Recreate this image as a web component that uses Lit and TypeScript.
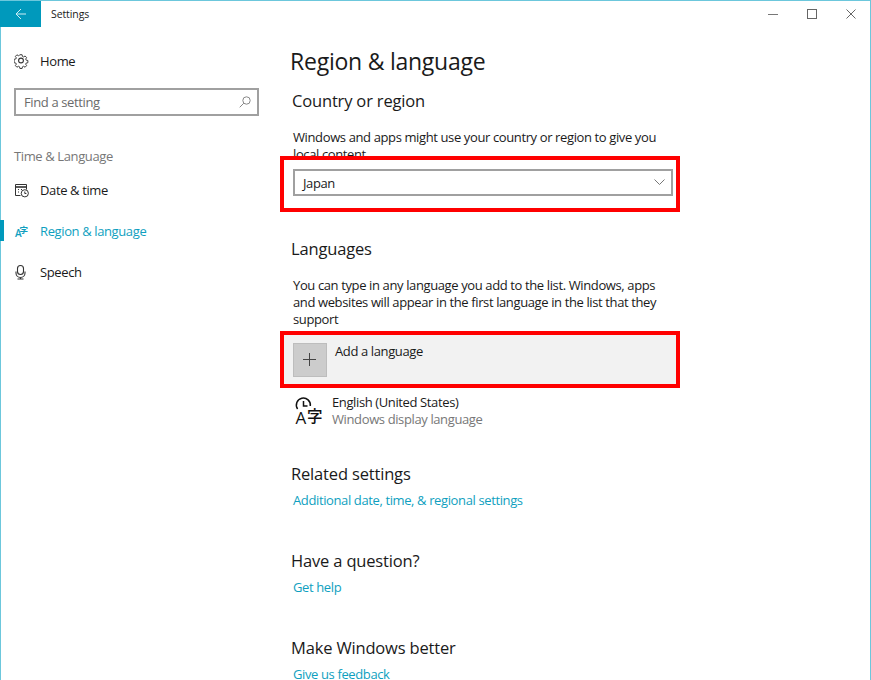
import { LitElement, html, css, svg } from "lit";
import { customElement } from "lit/decorators.js";

const gear = svg`<svg width="16" height="16" viewBox="0 0 16 16" fill="none" stroke="#333" stroke-width="1.1"><circle cx="7" cy="7.5" r="2.4"/><path d="M6.7 1.2h2.6l.4 2 1.3.6 1.8-1.1 1.8 1.9-1.1 1.7.6 1.3 2 .4v2.6l-2 .4-.6 1.3 1.1 1.7-1.8 1.9-1.8-1.1-1.3.6-.4 2H6.7l-.4-2-1.3-.6-1.8 1.1-1.8-1.9 1.1-1.7-.6-1.3-2-.4V6.6l2-.4.6-1.3-1.1-1.7 1.8-1.9 1.8 1.1 1.3-.6z" transform="translate(.2 .7) scale(.85)"/></svg>`;
const calendar = svg`<svg width="16" height="16" viewBox="0 0 16 16" fill="none" stroke="#333"><path d="M6.5 13.5h-5v-11h11v5"/><path d="M2 5h10.5" stroke-width="1.6"/><path d="M4 7.5h1M7 7.5h1M4 10h1" /><circle cx="10.8" cy="11.3" r="3.6"/><path d="M10.8 9.5v2h1.6"/></svg>`;
const regionIcon = svg`<svg class="icon" width="16" height="16" viewBox="0 0 16 16"><text x="1" y="14" font-size="10" font-weight="600" font-family="'Open Sans',sans-serif" fill="#0f9fc0">A</text><text x="5.5" y="9.5" font-size="8.5" font-weight="700" font-family="'Noto Sans CJK JP',sans-serif" fill="#0f9fc0">字</text></svg>`;
const mic = svg`<svg width="16" height="16" viewBox="0 0 16 16" fill="none" stroke="#333" stroke-width="1.1"><rect x="3.5" y="1.5" width="6" height="9" rx="3"/><path d="M2 7.5v1.5a4.5 4.5 0 0 0 9 0V7.5M6.5 13.5v1.5M3.5 15h6"/></svg>`;
const langIcon = svg`<svg class="icon" width="30" height="32" viewBox="0 0 30 32"><path d="M3.6 15A7 7 0 1 1 16.3 12" fill="none" stroke="#111" stroke-width="1.5"/><path d="M9.5 7v5h4" fill="none" stroke="#111" stroke-width="1.5"/><text x="1.5" y="29.5" font-size="17" font-family="'Open Sans',sans-serif" fill="#111">A</text><text x="13" y="27.5" font-size="15.5" font-weight="500" font-family="'Noto Sans CJK JP',sans-serif" fill="#111">字</text></svg>`;

@customElement("app-root")
export class AppRoot extends LitElement {
  static styles = css`
    :host {
      display: block;
      width: 871px;
      height: 680px;
      overflow: hidden;
      font-family: "Open Sans", "Noto Sans", sans-serif;
      color: #1a1a1a;
      background: #fff;
      font-size: 13px;
      letter-spacing: -0.38px;
    }
    .icon {
      overflow: visible;
      flex: none;
    }
    .win {
      box-sizing: border-box;
      width: 871px;
      height: 680px;
      border: 1px solid #6cc7dc;
      border-bottom: none;
      display: flex;
      flex-direction: column;
    }
    .title {
      height: 26px;
      flex: none;
      display: flex;
      align-items: center;
    }
    .back {
      width: 41px;
      height: 26px;
      margin-left: -1px;
      background: #0099bc;
      display: flex;
      align-items: center;
      justify-content: center;
    }
    .title-text {
      margin-left: 10px;
      font-size: 10.5px;
      letter-spacing: -0.1px;
      flex: 1;
    }
    .caps {
      display: flex;
      align-items: center;
    }
    .cap {
      width: 39px;
      height: 26px;
      display: flex;
      align-items: center;
      justify-content: center;
    }
    .body {
      flex: 1;
      display: flex;
      min-height: 0;
    }
    .side {
      width: 290px;
      flex: none;
    }
    .nav {
      height: 41px;
      display: flex;
      align-items: center;
      gap: 10px;
      padding-left: 13px;
      position: relative;
    }
    .nav.home {
      margin-top: 13px;
    }
    .nav.active {
      color: #0f9fc0;
    }
    .nav.active::before {
      content: "";
      position: absolute;
      left: -1px;
      top: 10px;
      width: 4px;
      height: 21px;
      background: #0099bc;
    }
    .search {
      box-sizing: border-box;
      margin: 7px 0 0 13px;
      width: 245px;
      height: 28px;
      border: 2px solid #a0a0a0;
      display: flex;
      align-items: center;
      justify-content: space-between;
      padding: 0 6px 1px 8px;
      color: #6b6b6b;
    }
    .group {
      margin: 30px 0 0 13px;
      height: 20px;
      line-height: 20px;
      color: #777;
    }
    .group + .nav {
      margin-top: 3px;
    }
    .main {
      flex: 1;
      min-width: 0;
    }
    h1 {
      margin: 18px 0 0 -1px;
      font-size: 23px;
      font-weight: 400;
      line-height: 32px;
      letter-spacing: -0.24px;
    }
    h2 {
      margin: 0;
      font-size: 16.5px;
      font-weight: 400;
      line-height: 24px;
      letter-spacing: -0.17px;
    }
    .h-country {
      margin-top: 12px;
      padding-left: 1px;
    }
    p {
      margin: 16px 0 0;
      width: 385px;
      padding-left: 2px;
      line-height: 17px;
    }
    .select {
      box-sizing: border-box;
      margin: 6px 0 0 2px;
      width: 380px;
      height: 27px;
      border: 2px solid #a0a0a0;
      background: #fff;
      display: flex;
      align-items: center;
      justify-content: space-between;
      padding: 0 6px 0 8px;
      position: relative;
    }
    .h-lang {
      margin-top: 41px;
    }
    .add {
      position: relative;
      margin: 7px 0 0 -7px;
      width: 392px;
      height: 49px;
      box-sizing: border-box;
      background: #f2f2f2;
      padding: 8px 9px;
      display: flex;
      gap: 8px;
      line-height: 17px;
    }
    .plus {
      box-sizing: border-box;
      width: 34px;
      height: 34px;
      background: #ccc;
      border: 1px solid #bdbdbd;
      display: flex;
      align-items: center;
      justify-content: center;
      flex: none;
    }
    .mark {
      position: absolute;
      box-sizing: border-box;
      border: 4px solid #f00;
      pointer-events: none;
    }
    .mark.one {
      left: -15px;
      right: -9px;
      top: -15px;
      bottom: -18px;
    }
    .mark.two {
      left: -4px;
      right: -4px;
      top: -4px;
      bottom: -4px;
    }
    .lang {
      display: flex;
      margin: 10px 0 0 3px;
      gap: 8px;
      height: 36px;
      line-height: 17px;
    }
    .muted {
      color: #777;
    }
    .h-rel {
      margin-top: 32px;
    }
    .link {
      color: #0f9fc0;
      padding-left: 2px;
      height: 20px;
      line-height: 20px;
      margin-top: 4px;
    }
    .h-q {
      margin-top: 39px;
    }
  `;

  render() {
    return html`<div class="win">
      <div class="title">
        <div class="back">
          <svg width="12" height="12" viewBox="0 0 12 12" fill="none" stroke="#cfeef5"><path d="M11 6H1M6 1 1 6l5 5"/></svg>
        </div>
        <div class="title-text">Settings</div>
        <div class="caps">
          <div class="cap"><svg width="10" height="10" viewBox="0 0 10 10" stroke="#777"><path d="M0 5.5h10"/></svg></div>
          <div class="cap"><svg width="10" height="10" viewBox="0 0 10 10" fill="none" stroke="#666"><rect x=".5" y=".5" width="9" height="9"/></svg></div>
          <div class="cap"><svg width="10" height="10" viewBox="0 0 10 10" fill="none" stroke="#666"><path d="M.5.5l9 9M9.5.5l-9 9"/></svg></div>
        </div>
      </div>
      <div class="body">
        <div class="side">
          <div class="nav home">${gear}<span>Home</span></div>
          <div class="search">
            <span>Find a setting</span>
            <svg width="12" height="12" viewBox="0 0 12 12" fill="none" stroke="#888"><circle cx="7.5" cy="4.5" r="3.7"/><path d="M4.8 7.2.7 11.3"/></svg>
          </div>
          <div class="group">Time &amp; Language</div>
          <div class="nav">${calendar}<span>Date &amp; time</span></div>
          <div class="nav active">${regionIcon}<span>Region &amp; language</span></div>
          <div class="nav">${mic}<span>Speech</span></div>
        </div>
        <div class="main">
          <h1>Region &amp; language</h1>
          <h2 class="h-country">Country or region</h2>
          <p>Windows and apps might use your country or region to give you local content</p>
          <div class="select">
            <span>Japan</span>
            <svg width="11" height="7" viewBox="0 0 11 7" fill="none" stroke="#777"><path d="M.5.5l5 5 5-5"/></svg>
            <div class="mark one"></div>
          </div>
          <h2 class="h-lang">Languages</h2>
          <p>You can type in any language you add to the list. Windows, apps and websites will appear in the first language in the list that they support</p>
          <div class="add">
            <div class="plus">
              <svg width="14" height="14" viewBox="0 0 14 14" stroke="#444"><path d="M6.5 0v13M0 6.5h13"/></svg>
            </div>
            <span>Add a language</span>
            <div class="mark two"></div>
          </div>
          <div class="lang">
            ${langIcon}
            <div>
              <div>English (United States)</div>
              <div class="muted">Windows display language</div>
            </div>
          </div>
          <h2 class="h-rel">Related settings</h2>
          <div class="link">Additional date, time, &amp; regional settings</div>
          <h2 class="h-q">Have a question?</h2>
          <div class="link">Get help</div>
          <h2 class="h-q">Make Windows better</h2>
          <div class="link">Give us feedback</div>
        </div>
      </div>
    </div>`;
  }
}
